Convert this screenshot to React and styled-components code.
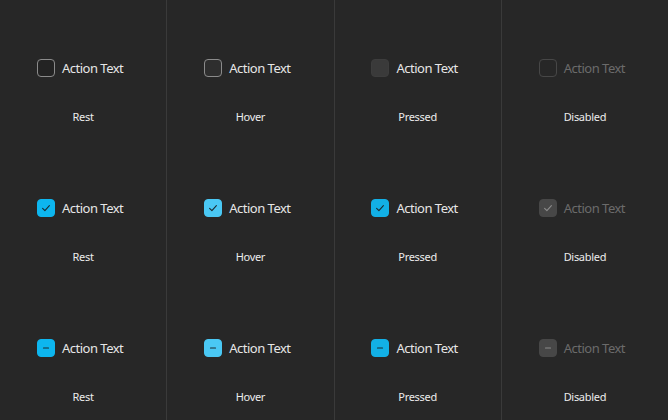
import React from "react";
import styled, { createGlobalStyle } from "styled-components";

const GlobalStyle = createGlobalStyle`
  html, body {
    margin: 0;
    padding: 0;
    background: #272727;
  }
  body {
    font-family: "Noto Sans", "Open Sans", sans-serif;
  }
`;

const Board = styled.div`
  width: 668px;
  height: 420px;
  display: grid;
  grid-template-columns: repeat(4, 1fr);
  grid-template-rows: repeat(3, 140px);
  column-gap: 1px;
  background: #3a3a3a;
  overflow: hidden;
`;

const Cell = styled.div`
  background: #272727;
  display: flex;
  flex-direction: column;
  align-items: center;
  padding-top: 58px;
  box-sizing: border-box;
`;

const Control = styled.div`
  display: flex;
  align-items: center;
  gap: 7px;
  height: 20px;
  margin-left: -6px;
`;

const boxLook = {
  unchecked: {
    rest: { bg: "rgba(0,0,0,0.1)", border: "#8b8b8b" },
    hover: { bg: "#2e2e2e", border: "#8b8b8b" },
    pressed: { bg: "#3a3a3a", border: "#3d3d3d" },
    disabled: { bg: "transparent", border: "#474747" },
  },
  filled: {
    rest: { bg: "#0db6ef", border: "#0db6ef" },
    hover: { bg: "#4ac8f4", border: "#4ac8f4" },
    pressed: { bg: "#12b0e6", border: "#12b0e6" },
    disabled: { bg: "#474747", border: "#474747" },
  },
};

const Box = styled.span`
  width: 18px;
  height: 18px;
  box-sizing: border-box;
  border-radius: 4px;
  border: 1px solid ${(p) => p.$border};
  background: ${(p) => p.$bg};
  display: flex;
  align-items: center;
  justify-content: center;
  flex: none;
`;

const Label = styled.span`
  font-size: 13px;
  letter-spacing: -0.5px;
  line-height: 20px;
  color: ${(p) => (p.$disabled ? "#6b6b6b" : "#e6e6e6")};
  white-space: nowrap;
`;

const StateName = styled.div`
  margin-top: 32px;
  font-size: 11px;
  letter-spacing: -0.3px;
  line-height: 14px;
  color: #ececec;
`;

function Mark({ kind, disabled }) {
  const stroke = disabled ? "#8c8c8c" : "#1b2a30";
  if (kind === "checked") {
    return (
      <svg width="12" height="12" viewBox="0 0 12 12">
        <path
          d="M2.6 6.3 L4.9 8.6 L9.4 3.6"
          fill="none"
          stroke={stroke}
          strokeWidth="1.1"
          strokeLinecap="round"
          strokeLinejoin="round"
        />
      </svg>
    );
  }
  if (kind === "mixed") {
    return (
      <svg width="12" height="12" viewBox="0 0 12 12">
        <path d="M3.5 6 H8.5" stroke={stroke} strokeWidth="1.1" strokeLinecap="round" />
      </svg>
    );
  }
  return null;
}

function CheckItem({ kind, state }) {
  const look = boxLook[kind === "unchecked" ? "unchecked" : "filled"][state];
  const disabled = state === "disabled";
  return (
    <Cell>
      <Control>
        <Box $bg={look.bg} $border={look.border}>
          <Mark kind={kind} disabled={disabled} />
        </Box>
        <Label $disabled={disabled}>Action Text</Label>
      </Control>
      <StateName>{state[0].toUpperCase() + state.slice(1)}</StateName>
    </Cell>
  );
}

const kinds = ["unchecked", "checked", "mixed"];
const states = ["rest", "hover", "pressed", "disabled"];

export default function App() {
  return (
    <>
      <GlobalStyle />
      <Board>
        {kinds.map((k) =>
          states.map((s) => <CheckItem key={k + s} kind={k} state={s} />)
        )}
      </Board>
    </>
  );
}
